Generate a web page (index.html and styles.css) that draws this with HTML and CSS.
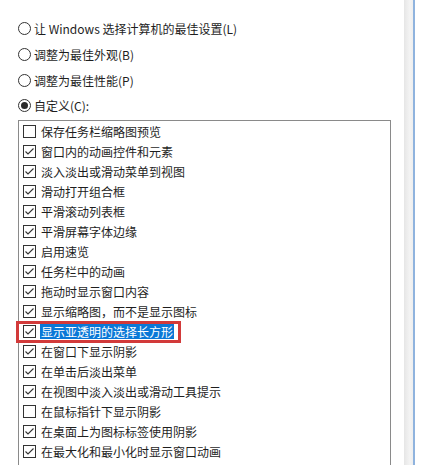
FILE: index.html
```html
<!DOCTYPE html>
<html lang="zh-CN">
<head>
<meta charset="utf-8">
<link rel="stylesheet" href="styles.css">
</head>
<body>
<div class="frame">
  <div class="main">
    <div class="radios">
      <div class="radio-row"><span class="radio"></span><span class="label">让 Windows 选择计算机的最佳设置(L)</span></div>
      <div class="radio-row"><span class="radio"></span><span class="label">调整为最佳外观(B)</span></div>
      <div class="radio-row"><span class="radio"></span><span class="label">调整为最佳性能(P)</span></div>
      <div class="radio-row"><span class="radio checked"></span><span class="label">自定义(C):</span></div>
    </div>
    <div class="listbox">
      <div class="item"><span class="cb"></span><span class="label">保存任务栏缩略图预览</span></div>
      <div class="item"><span class="cb"><svg viewBox="0 0 11 11"><polyline points="1.5,5.5 4,8 9.5,2.5"/></svg></span><span class="label">窗口内的动画控件和元素</span></div>
      <div class="item"><span class="cb"><svg viewBox="0 0 11 11"><polyline points="1.5,5.5 4,8 9.5,2.5"/></svg></span><span class="label">淡入淡出或滑动菜单到视图</span></div>
      <div class="item"><span class="cb"><svg viewBox="0 0 11 11"><polyline points="1.5,5.5 4,8 9.5,2.5"/></svg></span><span class="label">滑动打开组合框</span></div>
      <div class="item"><span class="cb"><svg viewBox="0 0 11 11"><polyline points="1.5,5.5 4,8 9.5,2.5"/></svg></span><span class="label">平滑滚动列表框</span></div>
      <div class="item"><span class="cb"><svg viewBox="0 0 11 11"><polyline points="1.5,5.5 4,8 9.5,2.5"/></svg></span><span class="label">平滑屏幕字体边缘</span></div>
      <div class="item"><span class="cb"><svg viewBox="0 0 11 11"><polyline points="1.5,5.5 4,8 9.5,2.5"/></svg></span><span class="label">启用速览</span></div>
      <div class="item"><span class="cb"><svg viewBox="0 0 11 11"><polyline points="1.5,5.5 4,8 9.5,2.5"/></svg></span><span class="label">任务栏中的动画</span></div>
      <div class="item"><span class="cb"><svg viewBox="0 0 11 11"><polyline points="1.5,5.5 4,8 9.5,2.5"/></svg></span><span class="label">拖动时显示窗口内容</span></div>
      <div class="item"><span class="cb"><svg viewBox="0 0 11 11"><polyline points="1.5,5.5 4,8 9.5,2.5"/></svg></span><span class="label">显示缩略图，而不是显示图标</span></div>
      <div class="item"><span class="cb"><svg viewBox="0 0 11 11"><polyline points="1.5,5.5 4,8 9.5,2.5"/></svg></span><span class="label hl">显示亚透明的选择长方形</span><span class="mark"></span></div>
      <div class="item"><span class="cb"><svg viewBox="0 0 11 11"><polyline points="1.5,5.5 4,8 9.5,2.5"/></svg></span><span class="label">在窗口下显示阴影</span></div>
      <div class="item"><span class="cb"><svg viewBox="0 0 11 11"><polyline points="1.5,5.5 4,8 9.5,2.5"/></svg></span><span class="label">在单击后淡出菜单</span></div>
      <div class="item"><span class="cb"><svg viewBox="0 0 11 11"><polyline points="1.5,5.5 4,8 9.5,2.5"/></svg></span><span class="label">在视图中淡入淡出或滑动工具提示</span></div>
      <div class="item"><span class="cb"></span><span class="label">在鼠标指针下显示阴影</span></div>
      <div class="item"><span class="cb"><svg viewBox="0 0 11 11"><polyline points="1.5,5.5 4,8 9.5,2.5"/></svg></span><span class="label">在桌面上为图标标签使用阴影</span></div>
      <div class="item"><span class="cb"><svg viewBox="0 0 11 11"><polyline points="1.5,5.5 4,8 9.5,2.5"/></svg></span><span class="label">在最大化和最小化时显示窗口动画</span></div>
    </div>
  </div>
  <div class="edge"></div>
  <div class="edge-line"></div>
</div>
</body>
</html>
```

FILE: styles.css
```css
html, body {
  margin: 0;
  padding: 0;
  background: #ffffff;
  overflow: hidden;
}
body {
  width: 425px;
  height: 465px;
  font-family: "Noto Sans CJK SC", "Noto Sans", sans-serif;
  font-size: 12px;
  color: #1e1e1e;
}
.frame {
  display: flex;
  height: 465px;
}
.main {
  flex: 0 0 404px;
  overflow: hidden;
}
.edge {
  flex: 0 0 9px;
  background: linear-gradient(to right, #e6e6e6, #f3f3f3 60%, #eeeeee);
}
.edge-line {
  flex: 0 0 2px;
  background: #8fb3de;
}
.radios {
  padding: 16px 0 0 18px;
}
.radio-row {
  height: 25.67px;
  display: flex;
  align-items: center;
  gap: 3px;
}
.radio {
  width: 11px;
  height: 11px;
  border: 1px solid #333;
  border-radius: 50%;
  display: flex;
  align-items: center;
  justify-content: center;
  flex: 0 0 auto;
}
.radio.checked::after {
  content: "";
  width: 7px;
  height: 7px;
  border-radius: 50%;
  background: #2a2a2a;
}
.label {
  white-space: nowrap;
  line-height: 15px;
}
.listbox {
  margin: 1px 0 0 18px;
  width: 371px;
  height: 400px;
  border: 1px solid #8a8a8a;
  padding-top: 1px;
}
.item {
  position: relative;
  height: 20px;
  display: flex;
  align-items: center;
  padding-left: 4px;
  gap: 5px;
}
.cb {
  width: 11px;
  height: 11px;
  border: 1px solid #333;
  flex: 0 0 auto;
  display: block;
}
.cb svg {
  display: block;
  width: 11px;
  height: 11px;
}
.cb svg polyline {
  fill: none;
  stroke: #333;
  stroke-width: 1.1;
}
.hl {
  background: #0a78d7;
  color: #ffffff;
  padding: 0 1px;
  margin-left: -1px;
}
.mark {
  position: absolute;
  left: -3px;
  top: -1px;
  width: 159px;
  height: 16px;
  border: 3px solid #d23a3a;
  pointer-events: none;
}
```
